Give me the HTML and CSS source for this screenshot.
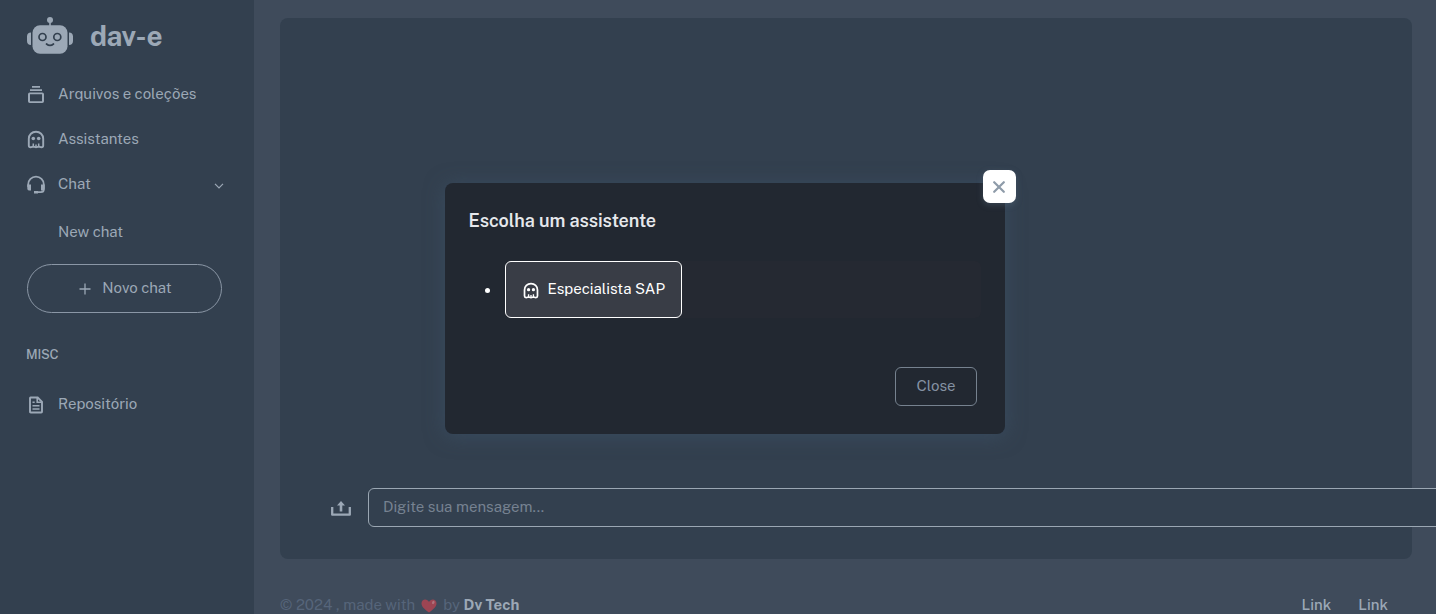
FILE: index.html
```html
<!DOCTYPE html>
<html lang="pt-BR">
<head>
<meta charset="utf-8">
<title>dav-e</title>
<link rel="stylesheet" href="styles.css">
</head>
<body>
<svg width="0" height="0" class="defs">
  <symbol id="ghost" viewBox="0 0 20 20">
    <path d="M10 1.800C5.900 1.800 2.800 4.800 2.800 8.800V15.500C2.800 17 3.600 17.300 4.600 17.300C6 17.300 6.300 16.700 7.200 16.700S8.700 17.300 10 17.300S12 16.700 12.800 16.700S14 17.300 15.400 17.300C16.400 17.300 17.200 17 17.200 15.500V8.800C17.200 4.800 14.100 1.800 10 1.800Z" fill="none" stroke="currentColor" stroke-width="1.900"/>
    <path d="M7.300 17V13.500M10 17V14.500M12.700 17V13.500" stroke="currentColor" stroke-width="1.500"/>
    <circle cx="7.300" cy="8.500" r="1.800" fill="currentColor"/><circle cx="12.700" cy="8.500" r="1.800" fill="currentColor"/>
  </symbol>
</svg>
<div class="app">
  <aside class="sidebar">
    <a class="brand">
      <svg class="robot" viewBox="0 0 46 38">
        <g fill="currentColor"><circle cx="23" cy="3" r="3"/><rect x="22.200" y="4" width="1.600" height="5"/><rect x="5.500" y="8.200" width="35" height="28.500" rx="7.500"/><path d="M4 15.500V28C1.500 28 0 26.500 0 24V19.500C0 17 1.500 15.500 4 15.500ZM42 15.500V28C44.500 28 46 26.500 46 24V19.500C46 17 44.500 15.500 42 15.500Z"/></g>
        <g class="face"><circle cx="15.500" cy="20" r="3.500"/><circle cx="30.300" cy="20" r="3.500"/><path d="M19.500 27Q23 29.800 26.500 27"/></g>
      </svg>
      <span class="brand-name">dav-e</span>
    </a>
    <nav class="menu">
      <a class="item"><svg class="ico" viewBox="0 0 20 20"><path d="M6 1H14V2.800H6ZM4 4.200H16V6H4ZM3.800 7.500H16.200Q18 7.500 18 9.300V16.200Q18 18 16.200 18H3.800Q2 18 2 16.200V9.300Q2 7.500 3.800 7.500ZM4 9.300V16.200H16V9.300Z" fill="currentColor" fill-rule="evenodd"/></svg><span>Arquivos e coleções</span></a>
      <a class="item"><svg class="ico"><use href="#ghost"/></svg><span>Assistantes</span></a>
      <a class="item"><svg class="ico" viewBox="0 0 20 20"><path d="M2.200 12V9.500A7.800 7.800 0 0 1 17.800 9.500V14.500Q17.800 17.200 15 17.200H11" fill="none" stroke="currentColor" stroke-width="1.800"/><path d="M1.300 9.500H5V15.500H3Q1.300 15.500 1.300 13.500ZM18.700 9.500H15V15.500H17Q18.700 15.500 18.700 13.500ZM8 16H12V18.600H8Z" fill="currentColor"/></svg><span>Chat</span><svg class="chevron" viewBox="0 0 10 6"><path d="M1 .8L5 4.800L9 .8"/></svg></a>
      <a class="subitem"><span>New chat</span></a>
    </nav>
    <button class="new-chat"><svg class="plus" viewBox="0 0 12 12"><path d="M6 .5V11.500M.5 6H11.500"/></svg><span>Novo chat</span></button>
    <h6 class="section">MISC</h6>
    <a class="item"><svg class="ico" viewBox="0 0 20 20"><path d="M4.500 2.500H11.700L16 6.800V16.700Q16 17.500 15.200 17.500H4.800Q4 17.500 4 16.700V3.300Q4 2.500 4.500 2.500Z" fill="none" stroke="currentColor" stroke-width="1.900"/><path d="M11.200 2.500V7.200H16M6.500 7.200H8.700M6.500 10.700H13.500M6.500 14H13.500" fill="none" stroke="currentColor" stroke-width="1.600"/></svg><span>Repositório</span></a>
  </aside>
  <div class="page">
    <main class="card">
      <form class="composer">
        <svg class="upload" viewBox="0 0 20 16"><path d="M1.200 6V13.700H18.800V6" fill="none" stroke="currentColor" stroke-width="2.300" stroke-linejoin="round"/><path d="M10 0L14 4.500H11.300V10.500H8.700V4.500H6Z" fill="currentColor"/></svg>
        <div class="field"><span>Digite sua mensagem...</span></div>
      </form>
    </main>
    <footer class="footer">
      <div class="credit"><span>© 2024 , made with</span><svg class="heart" viewBox="0 0 16 14"><path d="M8 13.500C3 10 .5 7.500 .5 4.300C.5 2 2.200 .6 4.200 .6C5.800 .6 7.300 1.500 8 3C8.700 1.500 10.200 .6 11.800 .6C13.800 .6 15.500 2 15.500 4.300C15.500 7.500 13 10 8 13.500Z" fill="#9d4553"/><ellipse cx="12.300" cy="3.500" rx="1.200" ry="1.700" fill="#b0737c" transform="rotate(25 12.300 3.500)"/></svg><span>by</span><b>Dv Tech</b></div>
      <div class="links"><a>Link</a><a>Link</a></div>
    </footer>
  </div>
</div>
<div class="modal">
  <button class="modal-x"><svg viewBox="0 0 12 12"><path d="M1.200 1.200L10.800 10.800M10.800 1.200L1.200 10.800"/></svg></button>
  <h5 class="modal-title">Escolha um assistente</h5>
  <ul class="choices"><li class="choice-row"><span class="dot"></span><div class="choice-bg"><button class="choice"><svg class="ghost-sm" viewBox="0 0 20 20"><use href="#ghost" width="20" height="20"/></svg><span>Especialista SAP</span></button></div></li></ul>
  <div class="modal-foot"><button class="close">Close</button></div>
</div>
</body>
</html>
```
FILE: styles.css
```css
* { box-sizing: border-box; }
body { margin: 0; height: 614px; overflow: hidden; background: #3f4b5b; color: #9ca8b6; font: 15px/22px "Public Sans", Inter, sans-serif; }
button { font: inherit; color: inherit; background: none; padding: 0; margin: 0; }
span, a, b { white-space: nowrap; }
svg { display: block; flex: none; }
.defs { position: absolute; }
.app { display: flex; height: 614px; }
.sidebar { width: 254px; flex: none; background: #33404f; padding: 17px 0 0; }
.brand { display: flex; align-items: center; height: 38px; padding-left: 27px; margin-bottom: 16px; }
.robot { width: 46px; height: 38px; margin-right: 17px; }
.face { fill: none; stroke: #33404f; stroke-width: 1.700; stroke-linecap: round; }
.brand-name { font-size: 28px; font-weight: 700; line-height: 38px; letter-spacing: -.45px; }
.item { display: flex; align-items: center; height: 45px; padding-left: 26px; }
.ico { width: 20px; height: 20px; margin: 2px 12px 0 0; }
.chevron { width: 10px; height: 6px; margin: 4px 30px 0 auto; fill: none; stroke: currentColor; stroke-width: 1.200; }
.subitem { display: flex; align-items: center; height: 52px; padding-left: 58px; }
.new-chat { display: flex; align-items: center; justify-content: center; width: 195px; height: 49px; margin: 6px 0 0 27px; padding: 0 0 2px 2px; border: 1px solid #8b97a6; border-radius: 25px; }
.plus { width: 12px; height: 12px; margin: 3px 11px 0 0; fill: none; stroke: currentColor; stroke-width: 1.300; }
.section { margin: 32px 0 16px 26px; font-size: 13px; font-weight: 500; line-height: 20px; letter-spacing: -.2px; }
.page { flex: 1; padding: 18px 24px 0 26px; min-width: 0; overflow: hidden; }
.card { height: 541px; border-radius: 8px; background: #33404f; padding: 470px 0 0 51px; }
.composer { display: flex; align-items: center; width: 1200px; height: 39px; margin: 0; }
.upload { width: 20px; height: 16px; margin: 3px 17px 0 0; }
.field { flex: 1; height: 39px; border: 1px solid #9ba7b3; border-radius: 6px; background: #33404f; padding: 7px 14px; color: #768291; }
.footer { display: flex; justify-content: space-between; padding: 35px 24px 0 0; }
.credit { display: flex; align-items: center; color: #56657a; }
.credit b { color: #9ca8b6; margin-left: 3.500px; }
.heart { width: 16px; height: 14px; margin: 1px 6px 0 6px; }
.links { display: flex; gap: 27px; font-weight: 500; }
.modal { position: absolute; left: 445px; top: 183px; width: 560px; height: 251px; border-radius: 8px; background: #222831; padding: 25px 24px 0; box-shadow: 0 2px 20px rgba(64,88,112,.5); }
.modal-x { position: absolute; left: 538px; top: -13px; width: 33px; height: 33px; border: 0; border-radius: 7px; background: #fff; display: grid; place-items: center; padding: 1px 1px 0 0; box-shadow: 0 2px 6px rgba(90,110,130,.4); }
.modal-x svg { width: 12px; height: 12px; stroke: #8e9ba9; stroke-width: 2.200; stroke-linecap: round; }
.modal-title { margin: 0 0 28px -.5px; font-size: 18px; line-height: 25px; font-weight: 600; letter-spacing: -.06px; color: #e6e8ec; }
.choices { list-style: none; margin: 0; padding: 0; }
.choice-row { display: flex; align-items: center; padding-left: 16px; }
.dot { width: 5px; height: 5px; border-radius: 50%; background: #fff; margin: 2px 15px 0 0; }
.choice-bg { width: 476px; background: #252932; border-radius: 6px; }
.choice { display: flex; align-items: center; width: 177px; height: 57px; border: 1px solid #fff; border-radius: 6px; background: #393d46; color: #fff; padding: 0 0 2px 16px; }
.ghost-sm { width: 18px; height: 18px; margin: 4px 7.500px 0 0; }
.modal-foot { display: flex; justify-content: flex-end; padding: 49px 4px 0 0; }
.close { width: 82px; height: 39px; border: 1px solid #76828f; border-radius: 6px; color: #8592a3; padding-bottom: 2px; }
```
